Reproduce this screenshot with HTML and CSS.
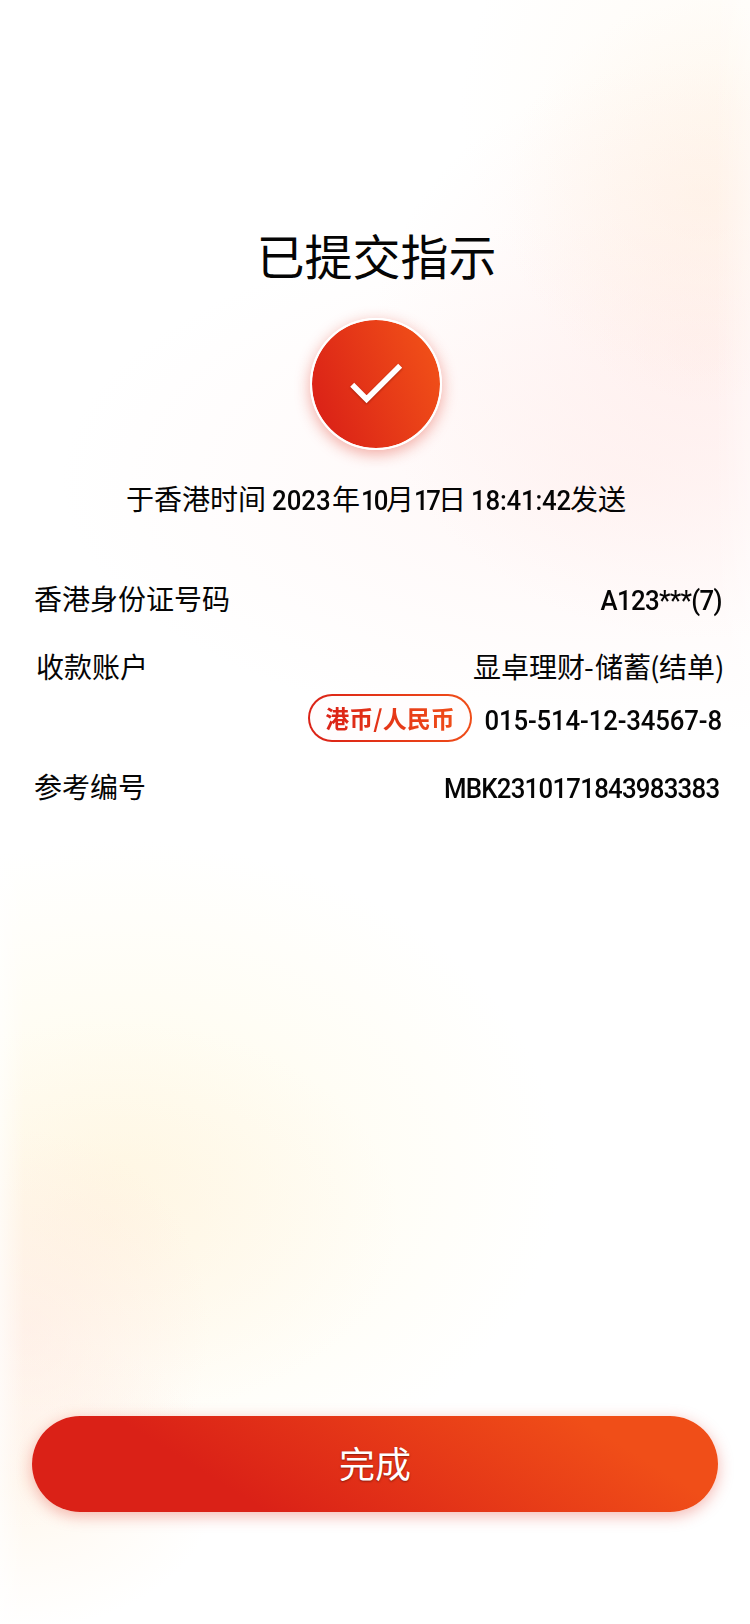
FILE: index.html
```html
<!DOCTYPE html>
<html lang="zh-CN">
<head>
<meta charset="utf-8">
<title>已提交指示</title>
<link rel="stylesheet" href="styles.css">
</head>
<body>
<main class="page">
  <h1 class="title">已提交指示</h1>
  <div class="badge">
    <svg class="check" viewBox="0 0 128 128" fill="none"><path d="M40.2 64.7 54.6 79.3 88.2 45.7" stroke="#fff" stroke-width="5.6"/></svg>
  </div>
  <p class="time"><span class="t-place">于香港时间</span><span class="num t-year">2023</span><span class="t-unit">年</span><span class="num t-month">10</span><span class="t-unit-month">月</span><span class="num t-day">17</span><span class="t-unit-day">日</span><span class="num t-clock">18:41:42</span><span>发送</span></p>
  <section class="details">
    <div class="row">
      <span class="label">香港身份证号码</span>
      <span class="num value v-id">A123***(7)</span>
    </div>
    <div class="row account">
      <span class="label label-account">收款账户</span>
      <div class="account-info">
        <span class="account-name">显卓理财<span class="hyphen">-</span>储蓄<span class="open">(</span>结单<span class="close">)</span></span>
        <div class="account-line">
          <span class="pill"><span class="pill-text">港币/人民币</span></span>
          <span class="num value v-account">015-514-12-34567-8</span>
        </div>
      </div>
    </div>
    <div class="row">
      <span class="label">参考编号</span>
      <span class="num value v-ref">MBK2310171843983383</span>
    </div>
  </section>
  <button class="done">完成</button>
</main>
</body>
</html>
```
FILE: styles.css
```css
* { box-sizing: border-box; }
body { margin: 0; }
.page {
  display: flex;
  flex-direction: column;
  height: 1624px;
  padding: 218px 27px 112px 32px;
  overflow: hidden;
  color: #050505;
  font: 400 28px/40px "Noto Sans CJK SC", sans-serif;
  background:
    linear-gradient(90deg, rgba(255, 255, 255, .6), rgba(255, 255, 255, 0) 24px, rgba(255, 255, 255, 0) 715px, rgba(255, 255, 255, .35)),
    radial-gradient(ellipse 200px 200px at 705px 200px, rgba(255, 230, 208, .28), rgba(255, 230, 208, 0)),
    radial-gradient(ellipse 330px 290px at 700px 350px, rgba(255, 218, 214, .32), rgba(255, 218, 214, 0)),
    radial-gradient(ellipse 290px 280px at 750px 110px, rgba(255, 243, 226, .4), rgba(255, 243, 226, 0)),
    radial-gradient(ellipse 560px 260px at 620px 480px, rgba(255, 228, 226, .3), rgba(255, 228, 226, 0)),
    radial-gradient(ellipse 180px 200px at 30px 1330px, rgba(255, 222, 216, .34), rgba(255, 222, 216, 0)),
    radial-gradient(ellipse 290px 200px at 110px 1220px, rgba(255, 234, 212, .32), rgba(255, 234, 212, 0)),
    radial-gradient(ellipse 200px 150px at 20px 1480px, rgba(255, 240, 220, .5), rgba(255, 240, 220, 0)),
    radial-gradient(ellipse 440px 330px at 120px 1170px, rgba(255, 249, 224, .7), rgba(255, 249, 224, 0)),
    #fff;
}
.title {
  align-self: center;
  margin: 0;
  font-size: 48px;
  font-weight: 400;
  line-height: 72px;
  transform: translateX(-1px);
}
.badge {
  width: 132px;
  height: 132px;
  margin: 28px 0 28px 278px;
  border: 2px solid #fff;
  border-radius: 50%;
  background: linear-gradient(68deg, #da2117 8%, #f04e18 88%) padding-box;
  box-shadow: 0 4px 15px rgba(222, 45, 26, .4);
}
.check { display: block; width: 128px; height: 128px; filter: drop-shadow(0 1px 1px rgba(90, 10, 0, .45)); }
.num { font-family: Roboto, sans-serif; font-weight: 500; white-space: nowrap; transform: scaleX(.92); transform-origin: 0 50%; }
.time { display: flex; align-items: baseline; height: 40px; margin: 0 0 0 94px; }
.t-place { width: 146px; }
.t-year { width: 60px; }
.t-unit { width: 29px; }
.t-month { width: 25px; letter-spacing: -2px; }
.t-unit-month { width: 28px; }
.t-day { width: 24px; letter-spacing: -2.5px; }
.t-unit-day { width: 33px; }
.t-clock { width: 99px; letter-spacing: -.2px; }
.details { display: flex; flex-direction: column; gap: 28px; margin-top: 60px; padding-left: 2px; }
.row { display: flex; justify-content: space-between; align-items: flex-start; height: 40px; }
.account { height: 92px; }
.label-account { padding-left: 2px; }
.account-info { display: flex; flex-direction: column; align-items: flex-end; }
.account-name { display: flex; height: 40px; margin-right: -2px; }
.hyphen { width: 11px; margin-left: -1px; }
.open { width: 9px; margin-left: -1px; }
.close { width: 10px; }
.account-line { display: flex; align-items: center; justify-content: flex-end; gap: 12px; height: 48px; margin-top: 8px; }
.pill {
  display: flex;
  flex: none;
  align-items: center;
  justify-content: center;
  width: 164px;
  height: 48px;
  border: 2px solid transparent;
  border-radius: 24px;
  background: linear-gradient(#fffdfd, #fffdfd) padding-box, linear-gradient(80deg, #da2117, #f04e18) border-box;
}
.pill-text {
  font-size: 24px;
  font-weight: 700;
  line-height: 40px;
  color: transparent;
  background: linear-gradient(80deg, #da2117, #f04e18);
  background-clip: text;
  -webkit-background-clip: text;
}
.value { display: flex; justify-content: flex-end; padding-top: 3px; transform-origin: 100% 50%; }
.v-id { margin-right: 1px; letter-spacing: -.7px; }
.v-account { width: 238px; margin-right: 1px; padding-top: 5px; letter-spacing: -.15px; }
.v-ref { margin-right: 4px; letter-spacing: -.8px; }
.done {
  width: 686px;
  height: 96px;
  margin-top: auto;
  padding: 0 0 5px;
  border: 0;
  border-radius: 48px;
  color: #fff;
  font: 400 36px/54px "Noto Sans CJK SC", sans-serif;
  text-shadow: 0 1px 2px rgba(80, 10, 0, .6);
  background: linear-gradient(32deg, #da2117 28%, #f04e18 83%);
  box-shadow: 0 4px 15px rgba(222, 45, 26, .34);
}
```
